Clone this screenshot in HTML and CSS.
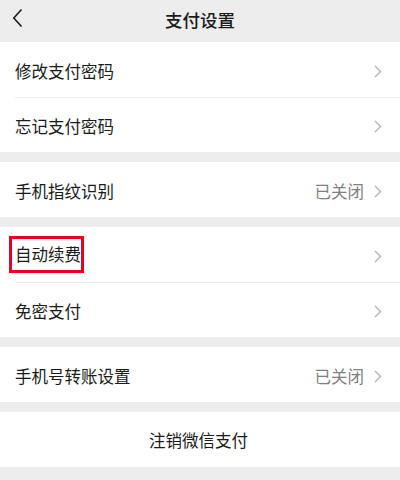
FILE: index.html
```html
<!DOCTYPE html>
<html lang="zh-CN">
<head>
    <meta charset="UTF-8">
    <meta name="viewport" content="width=device-width, initial-scale=1.0">
    <title>支付设置</title>
    <link rel="stylesheet" href="styles.css">
</head>
<body>
    <div class="page">
        <div class="nav-bar">
            <span class="back">
                <svg width="11" height="20" viewBox="0 0 11 20"><path d="M9.5 1.5 L1.8 10 L9.5 18.5" fill="none" stroke="#1a1a1a" stroke-width="1.6"/></svg>
            </span>
            <span class="nav-title">支付设置</span>
        </div>

        <div class="group">
            <div class="cell">
                <span class="cell-label">修改支付密码</span>
                <span class="arrow"><svg width="8" height="13" viewBox="0 0 8 13"><path d="M1 1 L6.5 6.5 L1 12" fill="none" stroke="#b2b2b2" stroke-width="1.3"/></svg></span>
            </div>
            <div class="cell">
                <span class="cell-label">忘记支付密码</span>
                <span class="arrow"><svg width="8" height="13" viewBox="0 0 8 13"><path d="M1 1 L6.5 6.5 L1 12" fill="none" stroke="#b2b2b2" stroke-width="1.3"/></svg></span>
            </div>
        </div>

        <div class="group">
            <div class="cell">
                <span class="cell-label">手机指纹识别</span>
                <span class="cell-value">已关闭</span>
                <span class="arrow"><svg width="8" height="13" viewBox="0 0 8 13"><path d="M1 1 L6.5 6.5 L1 12" fill="none" stroke="#b2b2b2" stroke-width="1.3"/></svg></span>
            </div>
        </div>

        <div class="group">
            <div class="cell">
                <span class="cell-label marked">自动续费</span>
                <span class="arrow"><svg width="8" height="13" viewBox="0 0 8 13"><path d="M1 1 L6.5 6.5 L1 12" fill="none" stroke="#b2b2b2" stroke-width="1.3"/></svg></span>
            </div>
            <div class="cell">
                <span class="cell-label">免密支付</span>
                <span class="arrow"><svg width="8" height="13" viewBox="0 0 8 13"><path d="M1 1 L6.5 6.5 L1 12" fill="none" stroke="#b2b2b2" stroke-width="1.3"/></svg></span>
            </div>
        </div>

        <div class="group">
            <div class="cell">
                <span class="cell-label">手机号转账设置</span>
                <span class="cell-value">已关闭</span>
                <span class="arrow"><svg width="8" height="13" viewBox="0 0 8 13"><path d="M1 1 L6.5 6.5 L1 12" fill="none" stroke="#b2b2b2" stroke-width="1.3"/></svg></span>
            </div>
        </div>

        <div class="group">
            <div class="cell cell-center">注销微信支付</div>
        </div>
    </div>
</body>
</html>
```

FILE: styles.css
```css
/* 支付设置页 */
body {
    margin: 0;
    background-color: #ededed;
    font-family: "Noto Sans CJK SC", "Noto Sans", sans-serif;
    color: #1a1a1a;
}

.page {
    width: 400px;
    height: 480px;
    overflow: hidden;
}

.nav-bar {
    height: 42px;
    display: flex;
    align-items: center;
    justify-content: center;
    padding-bottom: 4px;
    box-sizing: border-box;
    position: relative;
}

.back {
    position: absolute;
    left: 12px;
    top: 8px;
    display: flex;
}

.nav-title {
    font-size: 17.5px;
    font-weight: 500;
}

.group {
    background: white;
    margin-bottom: 10px;
}

.cell {
    height: 55px;
    display: flex;
    align-items: center;
    padding: 0 18px 0 15px;
    font-size: 16.5px;
    position: relative;
}

.cell + .cell::before {
    content: "";
    position: absolute;
    top: 0;
    left: 15px;
    right: 0;
    border-top: 1px solid #ececec;
}

.cell-label {
    flex: 1;
    padding-top: 3px;
}

.cell-value {
    color: #808080;
    margin-right: 10px;
    padding-top: 3px;
}

.arrow {
    display: flex;
    padding-top: 3px;
}

.cell-center {
    justify-content: center;
}

/* 红框标注 */
.marked {
    flex: 0 0 auto;
    margin-right: auto;
    margin-left: -6px;
    border: 3px solid #e60021;
    padding: 4px 0 4px 3px;
    line-height: 23px;
}
```
